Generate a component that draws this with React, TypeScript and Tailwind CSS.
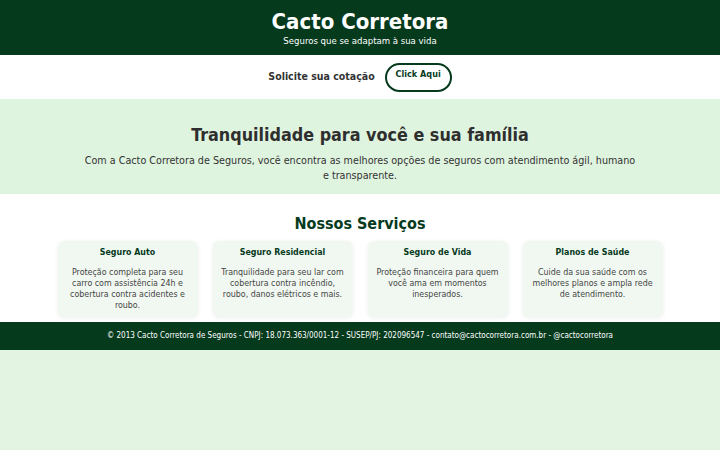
const SERVICES = [
  {
    title: "Seguro Auto",
    text: "Proteção completa para seu carro com assistência 24h e cobertura contra acidentes e roubo.",
  },
  {
    title: "Seguro Residencial",
    text: "Tranquilidade para seu lar com cobertura contra incêndio, roubo, danos elétricos e mais.",
  },
  {
    title: "Seguro de Vida",
    text: "Proteção financeira para quem você ama em momentos inesperados.",
  },
  {
    title: "Planos de Saúde",
    text: "Cuide da sua saúde com os melhores planos e ampla rede de atendimento.",
  },
];

export default function App() {
  return (
    <div className="min-h-[450px] bg-[#e3f4e3] font-['DejaVu_Sans_Condensed','DejaVu_Sans',sans-serif] text-[#333]">
      <header className="bg-[#063a1d] h-[55px] flex flex-col items-center pt-[8px] text-white">
        <h1 className="text-[22px] font-bold leading-[27px]">Cacto Corretora</h1>
        <p className="text-[9.5px] leading-[12px]">Seguros que se adaptam à sua vida</p>
      </header>

      <div className="bg-white h-[44px] flex items-center justify-center gap-[10px]">
        <span className="text-[10.5px] font-bold text-[#333]">Solicite sua cotação</span>
        <button className="w-[67px] h-[29px] rounded-full border-2 border-[#063a1d] text-[9px] font-bold text-[#063a1d] pt-[3px] flex justify-center items-start">
          Click Aqui
        </button>
      </div>

      <section className="bg-[#dff4df] h-[95px] flex flex-col items-center pt-[24px]">
        <h2 className="text-[17.8px] font-bold leading-[24px] text-[#2e2e2e]">
          Tranquilidade para você e sua família
        </h2>
        <p className="mt-[6px] max-w-[556px] text-center text-[10.7px] leading-[15px] text-[#333]">
          Com a Cacto Corretora de Seguros, você encontra as melhores opções de seguros com atendimento ágil, humano e transparente.
        </p>
      </section>

      <section className="bg-white h-[128px] pt-[19px] flex flex-col items-center">
        <h2 className="text-[16px] font-bold leading-[22px] text-[#063a1d]">Nossos Serviços</h2>
        <div className="mt-[6px] flex gap-[15px]">
          {SERVICES.map((s) => (
            <div
              key={s.title}
              className="w-[140px] h-[76px] rounded-md bg-[#f1f8f1] px-[8px] pt-[5px] text-center shadow-[0_1px_4px_rgba(0,40,0,0.08)]"
            >
              <h3 className="text-[8.8px] font-bold leading-[12px] text-[#063a1d]">{s.title}</h3>
              <p className="mt-[9px] text-[8.8px] leading-[11px] text-[#444]">{s.text}</p>
            </div>
          ))}
        </div>
      </section>

      <footer className="bg-[#063a1d] h-[28px] flex items-center justify-center text-white text-[8px]">
        © 2013 Cacto Corretora de Seguros - CNPJ: 18.073.363/0001-12 - SUSEP/PJ: 202096547 - contato@cactocorretora.com.br - @cactocorretora
      </footer>
    </div>
  );
}
